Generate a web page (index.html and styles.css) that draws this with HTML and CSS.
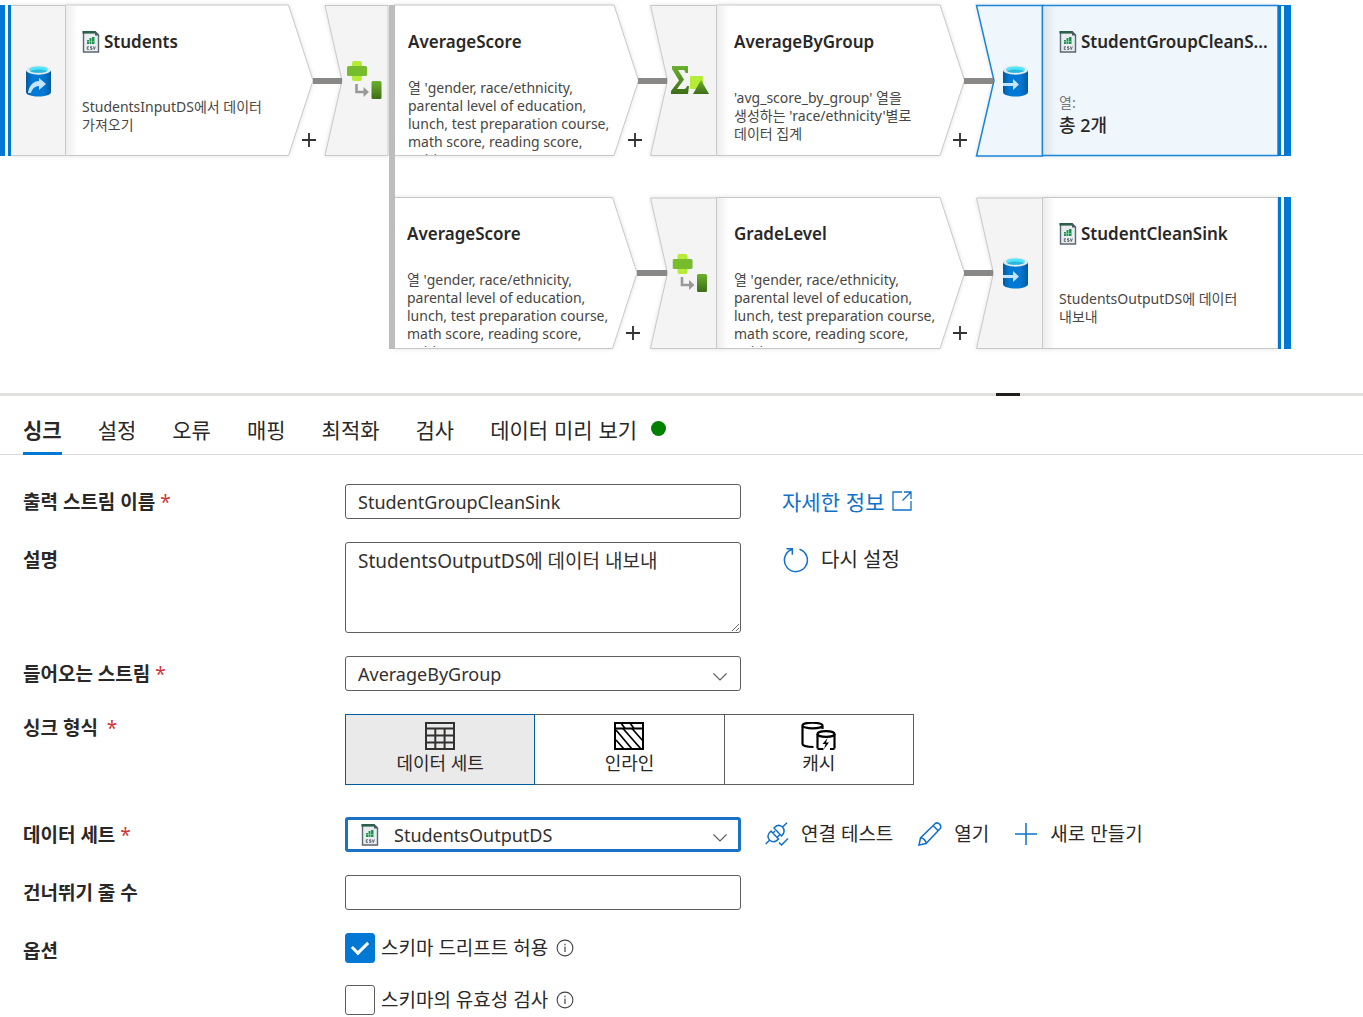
FILE: index.html
```html
<!DOCTYPE html>
<html lang="ko">
<head>
<meta charset="utf-8">
<meta name="viewport" content="width=device-width, initial-scale=1">
<title>데이터 흐름</title>
<link rel="stylesheet" href="styles.css">
</head>
<body>
<svg class="defs" aria-hidden="true">
  <defs>
    <linearGradient id="cyl" x1="0" x2="1" y1="0" y2="0"><stop offset="0" stop-color="#005ba1"/><stop offset=".25" stop-color="#0078d4"/><stop offset=".7" stop-color="#0078d4"/><stop offset="1" stop-color="#005ba1"/></linearGradient>
    <linearGradient id="leaf" x1="0" x2="0" y1="0" y2="1"><stop offset="0" stop-color="#6bb12c"/><stop offset="1" stop-color="#3e6d17"/></linearGradient>
    <linearGradient id="inner" x1="0" x2="1" y1="0" y2="0"><stop offset="0" stop-color="#000" stop-opacity=".07"/><stop offset="1" stop-color="#000" stop-opacity="0"/></linearGradient>
    <symbol id="cylinder" viewBox="0 0 26 32">
      <path d="M0 5v22c0 2.800 5.800 4.500 12.500 4.500S25 29.800 25 27V5z" fill="url(#cyl)"/>
      <ellipse cx="12.500" cy="5" rx="12.500" ry="4.700" fill="#e8e8e8"/>
      <ellipse cx="12.500" cy="4.600" rx="9.500" ry="3.200" fill="#50e6ff"/>
      <path d="M4 6.200c3.500-2.200 13.500-2.200 17 0-3.500 2-13.500 2-17 0z" fill="#2bb8dc"/>
    </symbol>
    <symbol id="derive" viewBox="0 0 36 40">
      <rect x="5" y="0" width="10" height="20" rx="2" fill="#b4ec36"/>
      <rect x="0" y="5" width="20" height="10" rx="1.500" fill="#76bc2d"/>
      <path d="M9.500 23v8h8" fill="none" stroke="#999" stroke-width="2.600"/>
      <path d="M16.500 26l5.500 5-5.500 5z" fill="#999"/>
      <rect x="24.500" y="20" width="10" height="18" rx="1.500" fill="url(#leaf)"/>
    </symbol>
    <symbol id="aggregate" viewBox="0 0 38 29">
      <rect x="19" y="10" width="13" height="13" rx="1" fill="#b4ec36"/>
      <path d="M1 0h16v7h-2.500c-.5-2.500-1-3-3.500-3H7l6 9.500L6 23h6c2.500 0 3-.5 4-3h2l-1 8H0v-3l8-10.500L1 3z" fill="url(#leaf)"/>
      <path d="M30 14l8 14H22z" fill="url(#leaf)"/>
    </symbol>
    <symbol id="csv" viewBox="0 0 17 22">
      <path d="M1 1h12l3 3v17H1z" fill="#e9edef" stroke="#5b6771" stroke-width="1.400"/>
      <path d="M0 0h13v2.600H0z" fill="#2c5f4a"/><path d="M12.500 0v4.500H17z" fill="#4d5a66"/>
      <path d="M4.500 9h2v4h-2zM7 7h2v6H7zM9.500 6H12v7H9.500z" fill="#1c9650"/><path d="M4.500 10.500H12" stroke="#8fd3ab" stroke-width=".6"/>
      <path d="M6.500 15.800H4.800v2.600h1.700M9.500 15.800H8v1.200h1.500v1.400H7.800M10.800 15.500l1 3 1-3" fill="none" stroke="#4d5a66" stroke-width=".9"/>
    </symbol>
    <symbol id="plus" viewBox="0 0 12 12"><path d="M6 0v12M0 6h12" stroke="#333" stroke-width="1.600"/></symbol>
    <symbol id="chevron" viewBox="0 0 14 8"><path d="M.5.500L7 7l6.500-6.500" fill="none" stroke="#605e5c" stroke-width="1.200"/></symbol>
    <symbol id="info" viewBox="0 0 18 18"><circle cx="9" cy="9" r="7.900" fill="none" stroke="#444" stroke-width="1.100"/><path d="M9 7.500V13M9 4.700v1.500" stroke="#444" stroke-width="1.200"/></symbol>
  </defs>
</svg>

<main>
<section class="canvas" aria-label="데이터 흐름 그래프">
  <svg class="wires" width="1300" height="360" aria-hidden="true">
    <g class="shape">
      <path class="head" d="M11 5.500H65.500V155.500H11"/>
      <path class="body" d="M65.500 5H288.500L313 80.500L288.500 155.500H65.500z"/>
      <path class="head" d="M388 5.500H325L342 80.500L325 155.500H388z"/>
      <path class="body" d="M394 5H614L638.500 80.500L614 155.500H394z"/>
      <path class="head" d="M716.500 5.500H650.500L667.500 80.500L650.500 155.500H716.500z"/>
      <path class="body" d="M716.500 5H940L964.500 80.500L940 155.500H716.500z"/>
      <path class="body" d="M394 197.500H612.500L637 273L612.500 348.500H394z"/>
      <path class="head" d="M716.500 198H650.500L667.500 273L650.500 348.500H716.500z"/>
      <path class="body" d="M716.500 197.500H940L964.500 273L940 348.500H716.500z"/>
      <path class="head" d="M1042.500 198H976.500L993.500 273L976.500 348.500H1042.500z"/>
      <path class="body" d="M1042.500 197.500H1278V348.500H1042.500z"/>
    </g>
    <g class="shape picked">
      <path d="M1042.500 5.500H976.500L994 80.500L976.500 156H1042.500z"/>
      <path d="M1042.500 5.500H1278V155.500H1042.500z"/>
    </g>
    <g fill="url(#inner)">
      <rect x="66" y="6" width="12" height="149"/>
      <rect x="717" y="6" width="12" height="149"/>
      <rect x="1044" y="7" width="12" height="148"/>
      <rect x="717" y="198" width="12" height="150"/>
      <rect x="1043" y="198" width="12" height="150"/>
    </g>
    <path d="M313 81h29M638 81h29M964 81h29M637 273h30M964 273h29" stroke="#8a8886" stroke-width="6"/>
    <path d="M392 5v344" stroke="#bdbdbd" stroke-width="6"/>
    <g fill="#0078d4">
      <path d="M0 5h5v151H0zM8 5h3v151H8zM1278 5h3v151h-3zM1284 5h7v151h-7zM1278 197h3v152h-3zM1284 197h7v152h-7z"/>
      <path d="M1281 5h3v1h-3zM1281 155h3v1h-3z"/>
    </g>
    <use href="#cylinder" x="26" y="65" width="26" height="32"/>
    <path d="M28 93c1-8 6-12 11-12v-3l7 6-7 6v-4c-4 0-7 3-8 7z" fill="#c3e4fb"/>
    <use href="#cylinder" x="1003" y="65" width="26" height="32"/>
    <path d="M1003 83h10v-4l6 5.500-6 5.500v-4h-10z" fill="#c3e4fb"/>
    <use href="#cylinder" x="1003" y="257" width="26" height="32"/>
    <path d="M1003 275h10v-4l6 5.500-6 5.500v-4h-10z" fill="#c3e4fb"/>
    <use href="#derive" x="347" y="61" width="36" height="40"/>
    <use href="#derive" x="672.500" y="254" width="36" height="40"/>
    <use href="#aggregate" x="671" y="66" width="38" height="29"/>
  </svg>

  <article class="node n1"><h3><svg class="csv"><use href="#csv"/></svg><span>Students</span></h3><p>StudentsInputDS에서 데이터 가져오기</p></article>
  <article class="node n2"><h3><span>AverageScore</span></h3><p class="long">열 'gender, race/ethnicity, parental level of education, lunch, test preparation course, math score, reading score, writing score, average_score'</p></article>
  <article class="node n3"><h3><span>AverageByGroup</span></h3><p>'avg_score_by_group' 열을 생성하는 'race/ethnicity'별로 데이터 집계</p></article>
  <article class="node n4"><h3><svg class="csv"><use href="#csv"/></svg><span>StudentGroupCleanS...</span></h3><dl><dt>열:</dt><dd>총 2개</dd></dl></article>
  <article class="node n5"><h3><span>AverageScore</span></h3><p class="long">열 'gender, race/ethnicity, parental level of education, lunch, test preparation course, math score, reading score, writing score, average_score'</p></article>
  <article class="node n6"><h3><span>GradeLevel</span></h3><p class="long">열 'gender, race/ethnicity, parental level of education, lunch, test preparation course, math score, reading score, writing score, average_score, grade_level'</p></article>
  <article class="node n7"><h3><svg class="csv"><use href="#csv"/></svg><span>StudentCleanSink</span></h3><p>StudentsOutputDS에 데이터 내보내</p></article>

  <button class="add a1" aria-label="추가"><svg><use href="#plus"/></svg></button>
  <button class="add a2" aria-label="추가"><svg><use href="#plus"/></svg></button>
  <button class="add a3" aria-label="추가"><svg><use href="#plus"/></svg></button>
  <button class="add a4" aria-label="추가"><svg><use href="#plus"/></svg></button>
  <button class="add a5" aria-label="추가"><svg><use href="#plus"/></svg></button>
</section>

<div class="splitter"><span class="grip"></span></div>

<div class="tabs" role="tablist">
  <button class="tab active" role="tab" aria-selected="true">싱크</button>
  <button class="tab" role="tab">설정</button>
  <button class="tab" role="tab">오류</button>
  <button class="tab" role="tab">매핑</button>
  <button class="tab" role="tab">최적화</button>
  <button class="tab" role="tab">검사</button>
  <button class="tab" role="tab">데이터 미리 보기<span class="dot"></span></button>
</div>

<form class="form">
  <div class="row">
    <label class="label" for="name">출력 스트림 이름 <span class="req">*</span></label>
    <input class="field" id="name" type="text" value="StudentGroupCleanSink">
    <a class="more" href="#more">자세한 정보
      <svg width="20" height="20" viewBox="0 0 20 20" fill="none" stroke="currentColor" stroke-width="1.300"><path d="M10 1H1v18h18v-9M12 1h7v7M19 1l-8.500 8.500"/></svg></a>
  </div>
  <div class="row">
    <label class="label" for="desc">설명</label>
    <textarea class="field area" id="desc">StudentsOutputDS에 데이터 내보내</textarea>
    <button class="action reset" type="button">
      <svg width="26" height="26" viewBox="0 0 26 26" fill="none" stroke="#1070ca" stroke-width="1.500"><path d="M16.500 2.200A11.500 11.500 0 1 1 8.500 2.500M3.500 1.800h5.800v6"/></svg>다시 설정</button>
  </div>
  <div class="row">
    <label class="label" for="stream">들어오는 스트림 <span class="req">*</span></label>
    <div class="pick"><select class="field" id="stream"><option>AverageByGroup</option></select><svg class="chev"><use href="#chevron"/></svg></div>
  </div>
  <div class="row types">
    <span class="label" id="type">싱크 형식 <span class="req far">*</span></span>
    <div class="segments" role="group" aria-labelledby="type">
      <button class="segment on" type="button" aria-pressed="true">
        <svg width="30" height="28" viewBox="0 0 30 28" fill="none" stroke="#323130" stroke-width="2"><path d="M1 1h28v26H1zM1 6.500h28M1 13.500h28M1 20.500h28M10.300 6.500V27M19.600 6.500V27"/></svg>데이터 세트</button>
      <button class="segment" type="button">
        <svg width="30" height="28" viewBox="0 0 30 28" fill="none" stroke="#000" stroke-width="2"><path d="M1 1h28v26H1zM1 6.500h28"/><path d="M2 18l8 9M2 8l16 19M9 6.500L27 27M18 6.500L29 19M7 1l4 5.500M16 1l4 5.500" stroke-width="1.700"/></svg>인라인</button>
      <button class="segment" type="button">
        <svg width="36" height="28" viewBox="0 0 36 28" fill="none" stroke="#000" stroke-width="2.200"><ellipse cx="11.500" cy="3.500" rx="10" ry="2.800"/><path d="M1.500 4v18c0 1.500 4 3 11 3M21.500 4v3"/><ellipse cx="25" cy="12" rx="8.500" ry="2.800"/><path d="M16.500 12v14.500M33.500 12v14.500M16.500 27h6M29 27h4.500"/><path d="M26.500 16l-5 6h3l-1.500 5 5-6.500h-3z" fill="#000" stroke="none"/></svg>캐시</button>
    </div>
  </div>
  <div class="row">
    <label class="label" for="dataset">데이터 세트 <span class="req">*</span></label>
    <div class="pick"><svg class="csv over"><use href="#csv"/></svg><select class="field focus" id="dataset"><option>StudentsOutputDS</option></select><svg class="chev"><use href="#chevron"/></svg></div>
    <div class="actions">
      <button class="action" type="button">
        <svg width="24" height="24" viewBox="0 0 24 24" fill="none" stroke="#1070ca" stroke-width="1.500"><path d="M.7 22l4-4M17.500 5L22 .7M4.500 18C2 15 2.500 12 6 9l7.500 8c-3 3.500-6 3.500-9 1zM17.500 5c-3-2.500-6-2-8.500 1l7.500 8c3-3 3.500-6 1-9zM10 9l-2 2M14.500 13l-2 2M14 20.500l2.500 2.500 6.500-6.500"/></svg>연결 테스트</button>
      <button class="action" type="button">
        <svg width="24" height="24" viewBox="0 0 24 24" fill="none" stroke="#1070ca" stroke-width="1.500"><path d="M1 23l1.500-7L17 1.700c3-2.500 7.500 2 5 5L8 21.500zM15 3.500L20.500 9M2.500 16c3 0 5.500 2.500 5.500 5.500"/></svg>열기</button>
      <button class="action" type="button">
        <svg width="24" height="24" viewBox="0 0 24 24" stroke="#1070ca" stroke-width="1.500"><path d="M12 1v22M1 12h22"/></svg>새로 만들기</button>
    </div>
  </div>
  <div class="row">
    <label class="label" for="skip">건너뛰기 줄 수</label>
    <input class="field" id="skip" type="text">
  </div>
  <div class="row">
    <span class="label" id="opts">옵션</span>
    <div class="checks" role="group" aria-labelledby="opts">
      <label class="check"><input type="checkbox" checked>스키마 드리프트 허용<svg class="info"><use href="#info"/></svg></label>
      <label class="check"><input type="checkbox">스키마의 유효성 검사<svg class="info"><use href="#info"/></svg></label>
    </div>
  </div>
</form>
</main>
</body>
</html>
```
FILE: styles.css
```css
* { box-sizing: border-box; }

body {
  margin: 0;
  background: #fff;
  color: #292827;
  font-family: "Noto Sans", "Noto Sans CJK KR", sans-serif;
  font-size: 19px;
}

button {
  margin: 0;
  padding: 0;
  border: 0;
  background: none;
  color: inherit;
  font: inherit;
}

.defs { position: absolute; width: 0; height: 0; }

/* Graph canvas */
.canvas { position: relative; height: 393px; overflow: hidden; }
.wires { display: block; }
.shape { filter: drop-shadow(0 0 2px rgba(0, 0, 0, .12)); }
.head { fill: #f4f4f4; stroke: #c8c8c8; }
.body { fill: #fff; stroke: #c8c8c8; }
.picked { fill: #eff6fc; stroke: #1a86d9; stroke-width: 1.5; }

.node {
  position: absolute;
  top: 5px;
  width: 204px;
  height: 150px;
  padding-top: 25px;
  overflow: hidden;
  word-break: keep-all;
}
.n1 { left: 82px; }
.n2 { left: 408px; }
.n3 { left: 734px; }
.n4 { left: 1059px; width: 212px; }
.n5 { left: 407px; top: 197px; }
.n6 { left: 734px; top: 197px; width: 208px; }
.n7 { left: 1059px; top: 197px; }

.node h3 {
  display: flex;
  align-items: center;
  gap: 4px;
  margin: 0;
  height: 24px;
  font-size: 17px;
  line-height: 24px;
  font-weight: 600;
  white-space: nowrap;
}
.csv { flex: none; width: 18px; height: 22px; }
.node p {
  display: flex;
  align-items: center;
  height: 72px;
  margin: 26px 0 0;
  color: #484644;
  font-size: 14px;
  line-height: 18px;
}
.node p.long { display: block; height: 90px; margin-top: 25px; }
.node dl { margin: 38px 0 0; font-size: 14px; line-height: 22px; }
.node dt { color: #797775; }
.node dd { margin: 0; font-size: 18px; font-weight: 500; }

.add { position: absolute; width: 14px; height: 14px; top: 133px; }
.add svg { display: block; width: 14px; height: 14px; }
.a1 { left: 302px; }
.a2 { left: 628px; }
.a3 { left: 953px; }
.a4 { left: 626px; top: 326px; }
.a5 { left: 953px; top: 326px; }

/* Panel divider */
.splitter {
  display: flex;
  justify-content: center;
  height: 3px;
  padding-left: 652px;
  background: #e1dfdd;
}
.grip { width: 24px; background: #201f1e; }

.tabs {
  display: flex;
  gap: 36px;
  height: 59px;
  padding: 0 23px;
  border-bottom: 1px solid #dcdcdc;
  font-family: "Noto Sans CJK KR", sans-serif;
  font-size: 21px;
}
.tab {
  display: flex;
  align-items: center;
  height: 59px;
  padding-top: 9px;
  border-bottom: 3px solid transparent;
  line-height: 30px;
}
.tab.active { border-color: #0078d4; font-weight: 700; }
.dot { width: 15px; height: 15px; margin-left: 14px; border-radius: 50%; background: #008000; }

/* Settings form */
.form { display: flex; flex-direction: column; gap: 23px; padding: 29px 23px 0; }
.row { display: grid; grid-template-columns: 322px 396px 1fr; align-items: start; }
.label { padding-top: 4px; line-height: 28px; font-weight: 700; }
.req { color: #d13438; font-weight: 400; }
.far { margin-left: 4px; }

.field {
  display: block;
  width: 100%;
  height: 35px;
  margin: 0;
  padding: 0 12px;
  border: 1px solid #605e5c;
  border-radius: 3px;
  outline: 0;
  background: #fff;
  color: #323130;
  font-family: inherit;
  font-size: 18px;
  line-height: 28px;
  appearance: none;
}
.area { height: 91px; padding-top: 4px; font-size: 19px; resize: vertical; }
.pick { position: relative; }
.chev { position: absolute; right: 14px; top: 17px; width: 14px; height: 8px; pointer-events: none; }
.over { position: absolute; left: 16px; top: 7px; pointer-events: none; }
.focus { padding-left: 46px; border: 3px solid #1b72c4; }

.more {
  display: flex;
  align-items: center;
  gap: 8px;
  padding: 2px 0 0 41px;
  color: #1070ca;
  font-family: "Noto Sans CJK KR", sans-serif;
  font-size: 21px;
  line-height: 30px;
  text-decoration: none;
}
.action { display: flex; align-items: center; gap: 12px; line-height: 28px; }
.action svg { flex: none; }
.reset { padding: 4px 0 0 42px; font-size: 20px; }
.actions { display: flex; gap: 25px; padding: 3px 0 0 24px; }

.types { padding-bottom: 9px; }
.types .label { padding-top: 0; }
.segments { grid-column: 2 / -1; display: flex; max-width: 569px; }
.segment {
  display: flex;
  flex: 1;
  flex-direction: column;
  align-items: center;
  height: 71px;
  padding-top: 7px;
  border: 1px solid #605e5c;
  font-size: 18px;
  line-height: 26px;
}
.segment + .segment { border-left: 0; }
.segment.on { border-color: #005a9e; background: #eaeaea; }

.checks { display: flex; flex-direction: column; gap: 22px; }
.check { display: flex; align-items: center; gap: 6px; height: 30px; line-height: 28px; white-space: nowrap; }
.check input {
  display: grid;
  place-items: center;
  width: 30px;
  height: 30px;
  margin: 0;
  border: 1px solid #605e5c;
  border-radius: 3px;
  background: #fff;
  appearance: none;
}
.check input:checked { border-color: #0078d4; background: #0078d4; }
.check input:checked::before {
  content: "";
  width: 13px;
  height: 7px;
  margin-bottom: 5px;
  border: solid #fff;
  border-width: 0 0 3px 3px;
  transform: rotate(-45deg);
}
.info { width: 18px; height: 18px; margin-left: 2px; }
```
